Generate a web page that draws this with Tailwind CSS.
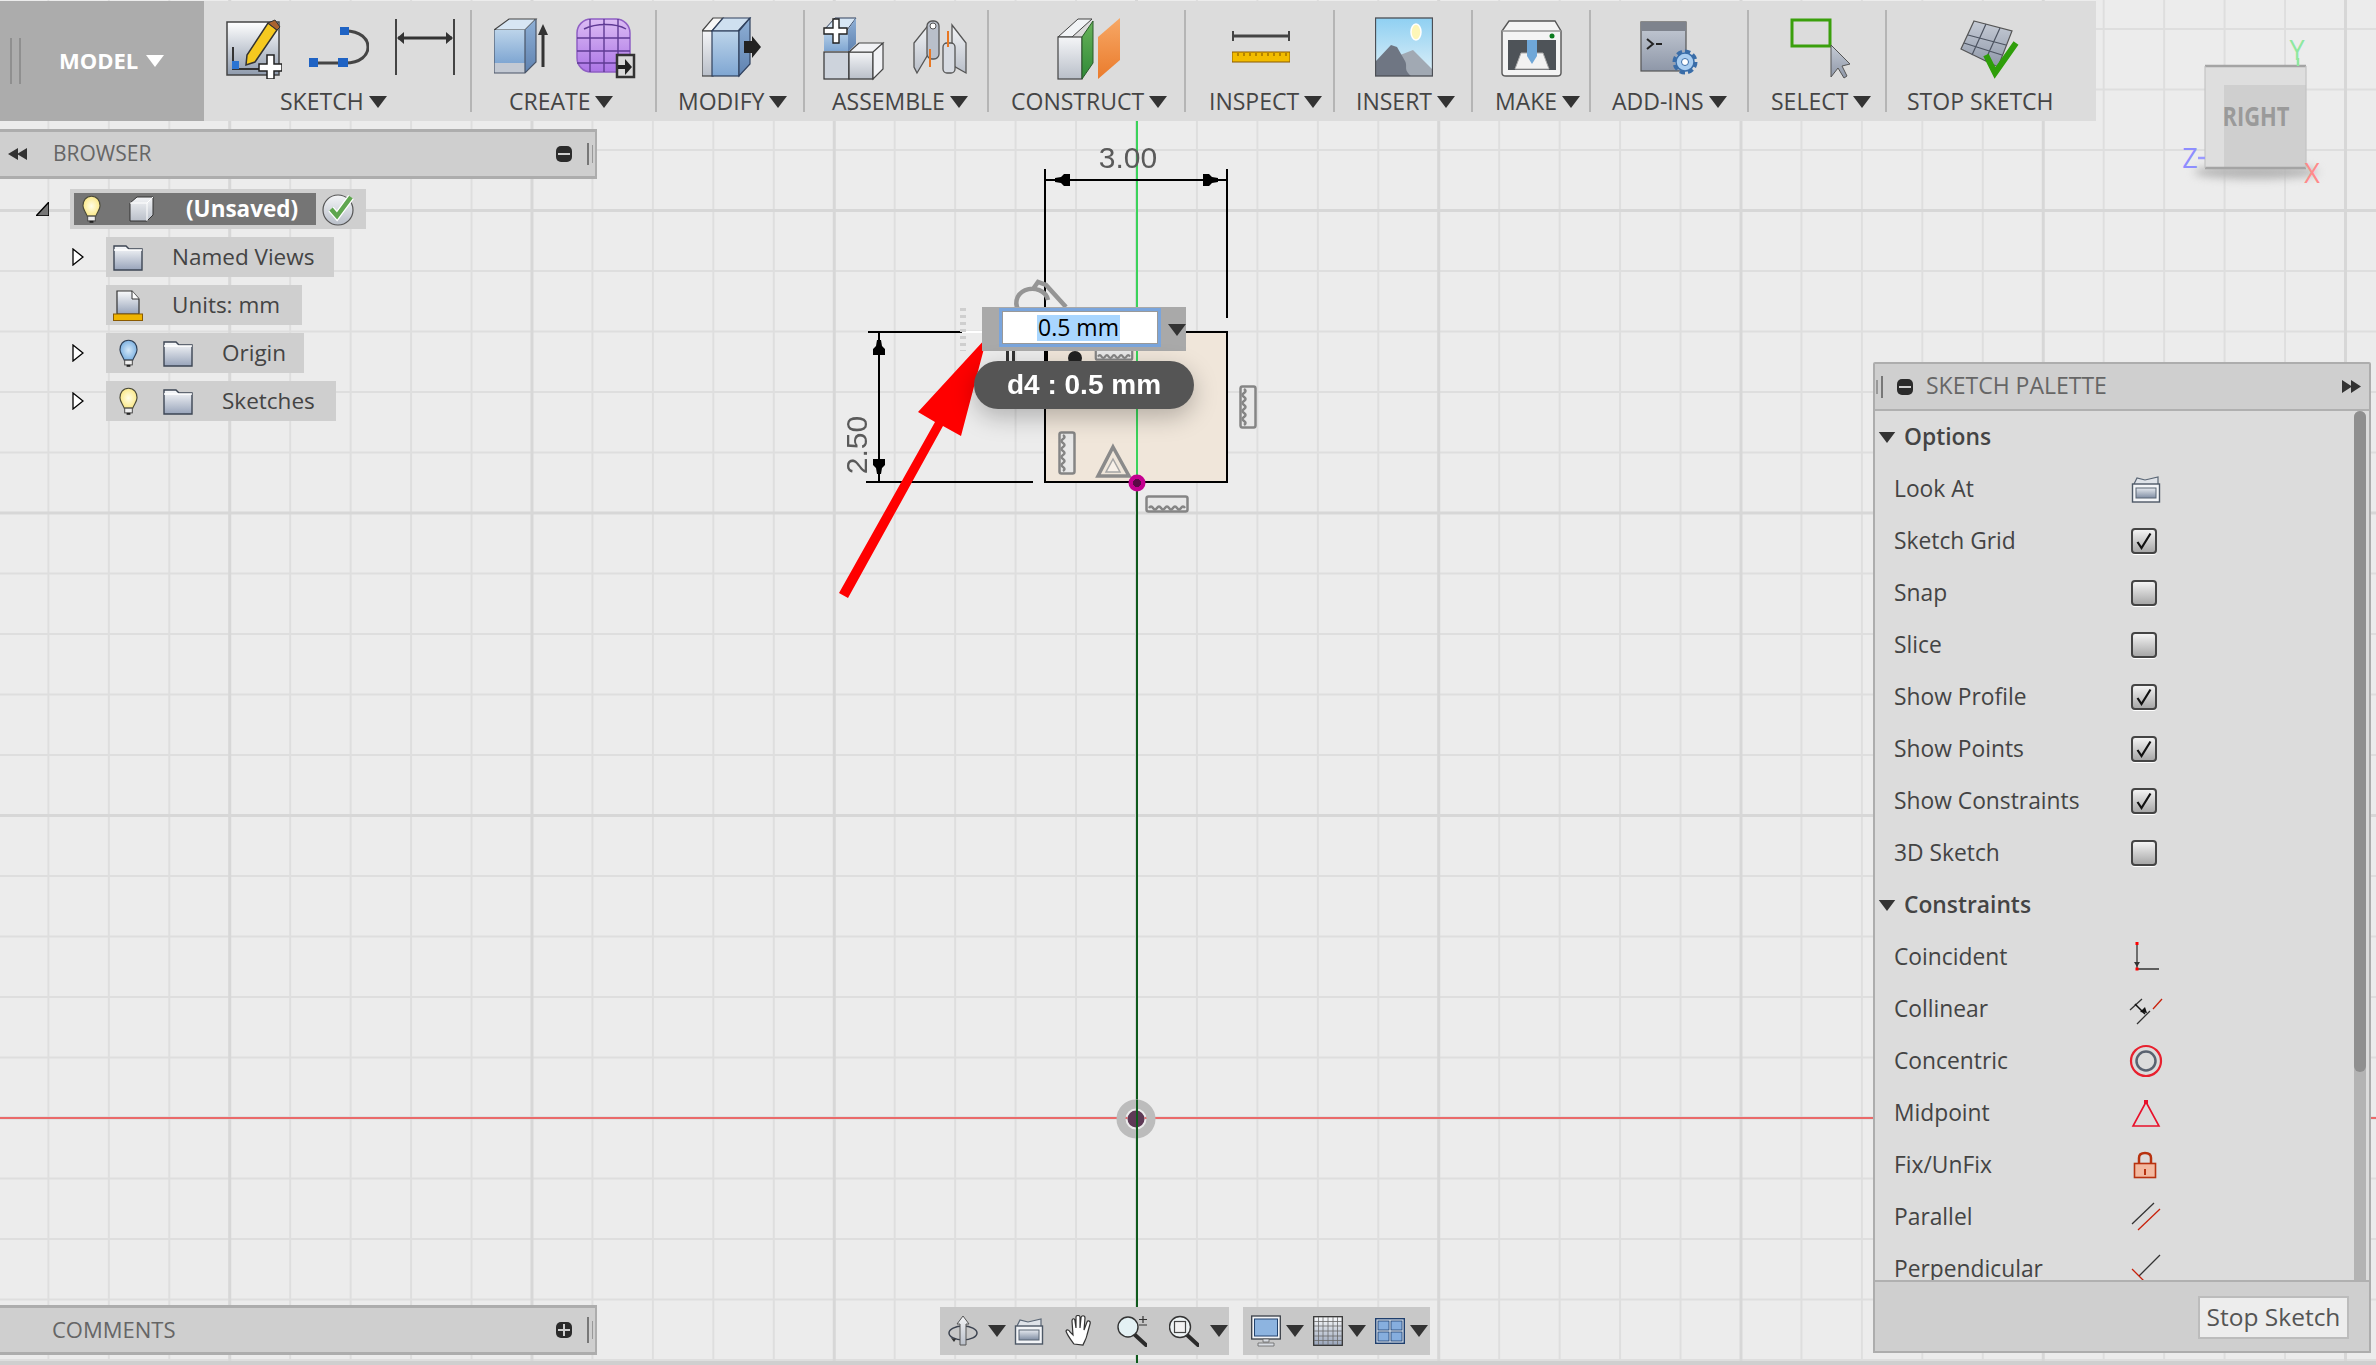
<!DOCTYPE html>
<html>
<head>
<meta charset="utf-8">
<script src="https://cdn.jsdelivr.net/npm/@tailwindcss/browser@4"></script>
</head>
<body class="m-0">
<svg class="absolute w-0 h-0" aria-hidden="true">
  <defs>
    <linearGradient id="gPaper" x1="0" y1="0" x2="0" y2="1"><stop offset="0" stop-color="#ffffff"/><stop offset="1" stop-color="#8f9bad"/></linearGradient>
    <linearGradient id="gBlue" x1="0" y1="0" x2="0" y2="1"><stop offset="0" stop-color="#bcd4ea"/><stop offset="1" stop-color="#7fa6d2"/></linearGradient>
    <linearGradient id="gBlueSide" x1="0" y1="0" x2="0" y2="1"><stop offset="0" stop-color="#8fb0d6"/><stop offset="1" stop-color="#5f82b0"/></linearGradient>
    <linearGradient id="gPurple" x1="0" y1="0" x2="0" y2="1"><stop offset="0" stop-color="#dcbcf4"/><stop offset="1" stop-color="#ab74e6"/></linearGradient>
    <linearGradient id="gGray" x1="0" y1="0" x2="0" y2="1"><stop offset="0" stop-color="#f4f5f7"/><stop offset="1" stop-color="#b9bfc9"/></linearGradient>
    <linearGradient id="gSteel" x1="0" y1="0" x2="0" y2="1"><stop offset="0" stop-color="#c6ccd6"/><stop offset="1" stop-color="#8e97a8"/></linearGradient>
    <linearGradient id="gGreen" x1="0" y1="0" x2="0" y2="1"><stop offset="0" stop-color="#69b35a"/><stop offset="1" stop-color="#2f8a38"/></linearGradient>
    <linearGradient id="gOrange" x1="0" y1="0" x2="0" y2="1"><stop offset="0" stop-color="#f7a866"/><stop offset="1" stop-color="#ea7b2c"/></linearGradient>
    <linearGradient id="gSky" x1="0" y1="0" x2="0" y2="1"><stop offset="0" stop-color="#8fd0f2"/><stop offset="1" stop-color="#dff0f8"/></linearGradient>
    <linearGradient id="gFolder" x1="0" y1="0" x2="0" y2="1"><stop offset="0" stop-color="#fafbfc"/><stop offset="1" stop-color="#98a4ba"/></linearGradient>
    <linearGradient id="gLook" x1="0" y1="0" x2="0" y2="1"><stop offset="0" stop-color="#e5e9ef"/><stop offset="1" stop-color="#7f8da3"/></linearGradient>
    <radialGradient id="gBulbY"><stop offset="0" stop-color="#fffde6"/><stop offset="1" stop-color="#fbe98a"/></radialGradient>
    <radialGradient id="gBulbB"><stop offset="0" stop-color="#d5e8f8"/><stop offset="1" stop-color="#7fb3e2"/></radialGradient>
    <radialGradient id="gPink"><stop offset="0" stop-color="#5a0a46"/><stop offset="0.45" stop-color="#5a0a46"/><stop offset="0.5" stop-color="#c4008f"/><stop offset="1" stop-color="#c4008f"/></radialGradient>
    <symbol id="tri" viewBox="0 0 18 12"><polygon points="0,0 18,0 9,12" fill="#333"/></symbol>
    <symbol id="folder" viewBox="0 0 30 27">
      <path d="M1 26V2h12l3 3h13v21z" fill="url(#gFolder)" stroke="#3d4654" stroke-width="1.4"/>
      <path d="M1 6h28" stroke="#ffffff" stroke-width="1.5"/>
    </symbol>
    <symbol id="bulbY" viewBox="0 0 20 30">
      <path d="M10 1C4 1 1 6 1 11c0 4 3 7 4.500 11h9C16 18 19 15 19 11c0-5-3-10-9-10z" fill="url(#gBulbY)" stroke="#4a4a3a" stroke-width="1.200"/>
      <rect x="6" y="22" width="8" height="5" fill="#eeeeee" stroke="#444" stroke-width="1"/>
      <rect x="8" y="27" width="4" height="2" fill="#222"/>
    </symbol>
    <symbol id="bulbB" viewBox="0 0 20 30">
      <path d="M10 1C4 1 1 6 1 11c0 4 3 7 4.500 11h9C16 18 19 15 19 11c0-5-3-10-9-10z" fill="url(#gBulbB)" stroke="#2f3f55" stroke-width="1.200"/>
      <rect x="6" y="22" width="8" height="5" fill="#eeeeee" stroke="#444" stroke-width="1"/>
      <rect x="8" y="27" width="4" height="2" fill="#222"/>
    </symbol>
    <symbol id="look" viewBox="0 0 30 28">
      <path d="M3 9L6 3l8 2 13-3v7" fill="#dfe3e9" stroke="#5a6675" stroke-width="1.200"/>
      <rect x="1.500" y="9" width="27" height="18" fill="#f3f5f8" stroke="#4d5866" stroke-width="1.400"/>
      <rect x="5" y="13" width="20" height="10" fill="url(#gLook)" stroke="#5a6675" stroke-width="1"/>
    </symbol>
    <symbol id="chk" viewBox="0 0 20 20"><path d="M3.500 11l4 6L16.500 2.500" fill="none" stroke="#111" stroke-width="2.200"/></symbol>
    <symbol id="gruler" viewBox="0 0 44 18">
      <rect x="1.500" y="1.500" width="41" height="15" rx="2" fill="#e8e8e8" stroke="#858585" stroke-width="2.500"/>
      <path d="M4 13q2-3 4 0t4 0 4 0 4 0 4 0 4 0 4 0 4 0 4 0" fill="none" stroke="#858585" stroke-width="2.500"/>
    </symbol>
  </defs>
</svg>

<div class="relative w-[2376px] h-[1365px] overflow-hidden bg-[#ececec] font-['Open_Sans',sans-serif]">

  <!-- canvas -->
  <svg class="absolute left-0 top-0 w-[2376px] h-[1365px]" viewBox="0 0 2376 1365">
    <defs>
      <pattern id="minor" patternUnits="userSpaceOnUse" x="1135.500" y="1117" width="60.450" height="60.500">
        <path d="M1 0V60.500M0 1H60.450" stroke="#dedede" stroke-width="2" fill="none"/>
      </pattern>
      <pattern id="major" patternUnits="userSpaceOnUse" x="1135" y="1116.500" width="302.250" height="302.500">
        <path d="M1.500 0V302.500M0 1.500H302.250" stroke="#d7d7d7" stroke-width="3" fill="none"/>
      </pattern>
    </defs>
    <rect width="2376" height="1365" fill="url(#minor)"/>
    <rect width="2376" height="1365" fill="url(#major)"/>
    <rect y="1361" width="2376" height="4" fill="#cfcfcf"/>

    <!-- axes -->
    <path d="M0 1118H2376" stroke="#ea6a6a" stroke-width="1.800"/>
    <path d="M1137 121V482" stroke="#3ad35a" stroke-width="2"/>
    <path d="M1137 482V1363" stroke="#0f5a1c" stroke-width="2"/>

    <!-- origin -->
    <circle cx="1136" cy="1119" r="15" fill="none" stroke="#bcbcbc" stroke-width="9"/>
    <circle cx="1136" cy="1119" r="9" fill="#ffffff" fill-opacity="0.500"/>
    <circle cx="1136" cy="1119" r="8.500" fill="#5e3a56"/>
    <path d="M1137 1100V1140" stroke="#0f5a1c" stroke-width="2"/>

    <!-- profile -->
    <rect x="1045" y="332" width="182" height="150" fill="#f0e6da"/>
    <path d="M1137 332V482" stroke="#3ad35a" stroke-width="2"/>
    <path d="M1228 332H1045V482H1227V332" fill="none" stroke="#000" stroke-width="2"/>

    <!-- dimension 3.00 -->
    <path d="M1045 169V332M1227 169V318" stroke="#000" stroke-width="2"/>
    <path d="M1046 180H1226" stroke="#000" stroke-width="2"/>
    <path d="M1055 178l6-1 3-3h6v12h-6l-3-3-6-1zM1218 178l-6-1-3-3h-6v12h6l3-3 6-1z" fill="#000"/>
    <text class="blur-[0.5px]" x="1128" y="168" text-anchor="middle" font-family="Liberation Sans" font-size="30" fill="#5a5a5a">3.00</text>

    <!-- dimension 2.50 -->
    <path d="M868 332H962M866 482H1033" stroke="#000" stroke-width="2"/>
    <path d="M962 332H982" stroke="#fff" stroke-width="2"/>
    <path d="M879 333V481" stroke="#000" stroke-width="2"/>
    <path d="M877 340h4l1 6 3 3v6h-12v-6l3-3zM873 459h12v6l-3 3-1 6h-4l-1-6-3-3z" fill="#000"/>
    <text class="blur-[0.5px]" transform="translate(867 445) rotate(-90)" text-anchor="middle" font-family="Liberation Sans" font-size="30" fill="#5a5a5a">2.50</text>

    <!-- constraint glyphs -->
    <g class="blur-[0.5px]">
      <use href="#gruler" x="1145" y="495" width="44" height="18"/>
      <use href="#gruler" transform="translate(1257 385) rotate(90)" width="44" height="18"/>
      <use href="#gruler" transform="translate(1077 431) rotate(90)" width="44" height="20"/>
      <use href="#gruler" x="1092" y="345" width="44" height="16"/>
      <path d="M1113 447L1129 476H1098z" fill="#efe6da" stroke="#8a8a8a" stroke-width="3.500"/>
      <path d="M1113 459L1120 472H1106z" fill="#f7f0e8" stroke="#a5a5a5" stroke-width="1.500"/>
      <path d="M1033 289l5-7 8 3 20 22M1048 300a16 14 0 1 0-2 10" fill="none" stroke="#959595" stroke-width="4.500"/>
    </g>
    <rect x="1006" y="350" width="3" height="12" fill="#333"/><rect x="1012" y="350" width="3" height="12" fill="#333"/>
    <circle cx="1075" cy="358" r="7" fill="#222"/>
    <path d="M1047 350v12" stroke="#000" stroke-width="2"/>
    <path d="M963 308V351" stroke="#cfcfcf" stroke-width="6" stroke-dasharray="3 4"/>

    <!-- sketch point -->
    <circle cx="1137" cy="483" r="8.500" fill="url(#gPink)"/>

    <!-- viewcube -->
    <ellipse class="blur-[4px]" cx="2256" cy="172" rx="62" ry="7" fill="#b5b5b5"/>
    <rect x="2205" y="66" width="101" height="102" fill="#dedede"/>
    <rect x="2224" y="85" width="82" height="83" fill="#cfcfcf"/>
    <path d="M2205 66H2306M2205 168H2306" stroke="#a4a4a4" stroke-width="2.500"/>
    <path d="M2205 66V168M2306 66V168" stroke="#c4c4c4" stroke-width="1.200"/>
    <path d="M2298 58V66" stroke="#8fe89f" stroke-width="2.500"/>
    <path d="M2198 158H2205" stroke="#9a9aff" stroke-width="2.500"/>
    <text x="2256" y="126" text-anchor="middle" font-family="Open Sans" font-weight="700" font-size="27" textLength="67" lengthAdjust="spacingAndGlyphs" fill="#9a9a9a">RIGHT</text>
    <text x="2297" y="60" text-anchor="middle" font-family="Open Sans" font-size="27" fill="#8fe89f">Y</text>
    <text x="2190" y="168" text-anchor="middle" font-family="Open Sans" font-size="27" fill="#8e8eff">Z</text>
    <text x="2312" y="183" text-anchor="middle" font-family="Open Sans" font-size="27" fill="#ff8a8a">X</text>
  </svg>

  <!-- ribbon toolbar -->
  <div class="absolute left-0 top-[1px] flex h-[120px] w-[2096px] bg-[#dcdcdc] text-[#454545] [&_span]:pb-[1px]">
    <div class="flex w-[204px] shrink-0 items-center bg-[#acacac] pl-[10px]">
      <div class="h-[46px] w-[2px] bg-[#8f8f8f]"></div>
      <div class="ml-[7px] h-[46px] w-[2px] bg-[#8f8f8f]"></div>
      <span class="ml-[38px] text-[22px] font-bold text-white">MODEL</span>
      <svg class="ml-[8px] h-[12px] w-[18px]" viewBox="0 0 18 12"><polygon points="0,0 18,0 9,12" fill="#fff"/></svg>
    </div>

    <!-- SKETCH -->
    <div class="flex w-[266px] shrink-0 flex-col">
      <div class="flex h-[87px] items-start pt-[16px]">
        <svg class="ml-[22px] h-[62px] w-[56px] shrink-0" viewBox="0 0 56 62">
          <rect x="1" y="5" width="52" height="53" fill="url(#gPaper)" stroke="#444" stroke-width="1.500"/>
          <path d="M42 6l9 7-22 32-9 3 1-10z" fill="#f6c91f" stroke="#333" stroke-width="1.500"/>
          <path d="M42 6l7-3 5 7-3 3z" fill="#a9622f" stroke="#333" stroke-width="1"/>
          <path d="M7 30V52H36" fill="none" stroke="#333" stroke-width="2"/>
          <rect x="6" y="44" width="7" height="8" fill="#2b74d2"/>
          <path d="M41 38h7v9h8v7h-8v8h-7v-8h-8v-7h8z" fill="#fff" stroke="#222" stroke-width="1.500"/>
        </svg>
        <svg class="ml-[27px] h-[62px] w-[60px] shrink-0" viewBox="0 0 60 62">
          <path d="M36 14C52 14 59 22 59 30S52 46 36 46H4" fill="none" stroke="#454545" stroke-width="3"/>
          <rect x="31" y="10" width="9" height="8" fill="#1f63c4"/>
          <rect x="0" y="41" width="9" height="9" fill="#1f63c4"/>
          <rect x="29" y="41" width="10" height="9" fill="#1f63c4"/>
        </svg>
        <svg class="ml-[26px] h-[62px] w-[60px] shrink-0" viewBox="0 0 60 62">
          <path d="M1 2V58M59 2V58" stroke="#444" stroke-width="2"/>
          <path d="M3 21H57" stroke="#333" stroke-width="3"/>
          <path d="M2 21l7-6v12zM58 21l-7-6v12z" fill="#333"/>
        </svg>
      </div>
      <div class="ml-[76px] flex h-[28px] items-center gap-[5px] text-[23px]"><span>SKETCH</span><svg class="h-[12px] w-[18px]"><use href="#tri"/></svg></div>
    </div>
    <div class="my-[9px] h-[102px] w-[2px] shrink-0 bg-[#b5b5b5]"></div>

    <!-- CREATE -->
    <div class="flex w-[183px] shrink-0 flex-col">
      <div class="flex h-[87px] items-start pt-[16px]">
        <svg class="ml-[22px] h-[62px] w-[56px] shrink-0" viewBox="0 0 56 62">
          <path d="M0 13L15 2h27L31 13z" fill="#d7e6f4" stroke="#444" stroke-width="1.200"/>
          <rect x="0" y="13" width="31" height="33" fill="url(#gBlue)"/>
          <rect x="0" y="46" width="31" height="10" fill="#c3c9d3"/>
          <path d="M31 13l11-11v43L31 56z" fill="url(#gBlueSide)"/>
          <path d="M0 13V56H31L42 45V2M31 13V56" fill="none" stroke="#4a5568" stroke-width="1.200"/>
          <path d="M49 50V14" stroke="#333" stroke-width="3"/><path d="M49 7l5 11H44z" fill="#333"/>
        </svg>
        <svg class="ml-[26px] h-[62px] w-[60px] shrink-0" viewBox="0 0 60 62">
          <rect x="1" y="2" width="53" height="53" rx="14" fill="url(#gPurple)" stroke="#8f5fc4" stroke-width="1.500"/>
          <path d="M1 21H54M1 34H54M1 46H54M14 2V55M28 2V55M42 2V55M8 12C20 6 40 6 50 12" fill="none" stroke="#5f3a94" stroke-width="1.400"/>
          <rect x="41" y="38" width="17" height="22" fill="#d9d9d9" stroke="#333" stroke-width="2.500"/>
          <path d="M42 48h7v-6l7 8-7 8v-6h-7z" fill="#222"/>
        </svg>
      </div>
      <div class="ml-[37px] flex h-[28px] items-center gap-[5px] text-[23px]"><span>CREATE</span><svg class="h-[12px] w-[18px]"><use href="#tri"/></svg></div>
    </div>
    <div class="my-[9px] h-[102px] w-[2px] shrink-0 bg-[#b5b5b5]"></div>

    <!-- MODIFY -->
    <div class="flex w-[146px] shrink-0 flex-col">
      <div class="flex h-[87px] items-start pt-[16px]">
        <svg class="ml-[45px] h-[62px] w-[60px] shrink-0" viewBox="0 0 60 62">
          <path d="M0 14L11 1h10L10 14z" fill="#f7f7f7" stroke="#444" stroke-width="1.200"/>
          <rect x="0" y="14" width="11" height="45" fill="url(#gGray)" stroke="#444" stroke-width="1.200"/>
          <path d="M10 14L21 1h27L36 14z" fill="#cfe0f0" stroke="#30415e" stroke-width="1.200"/>
          <rect x="10" y="14" width="27" height="45" fill="url(#gBlue)" stroke="#30415e" stroke-width="1.200"/>
          <path d="M37 14L48 1v46L37 59z" fill="url(#gBlueSide)" stroke="#30415e" stroke-width="1.200"/>
          <path d="M42 24h8v-5l9 11-9 11v-5h-8z" fill="#222"/>
        </svg>
      </div>
      <div class="ml-[21px] flex h-[28px] items-center gap-[5px] text-[23px]"><span>MODIFY</span><svg class="h-[12px] w-[18px]"><use href="#tri"/></svg></div>
    </div>
    <div class="my-[9px] h-[102px] w-[2px] shrink-0 bg-[#b5b5b5]"></div>

    <!-- ASSEMBLE -->
    <div class="flex w-[182px] shrink-0 flex-col">
      <div class="flex h-[87px] items-start pt-[16px]">
        <svg class="ml-[18px] h-[64px] w-[62px] shrink-0" viewBox="0 0 62 64">
          <path d="M1 13L12 1h21L24 13z" fill="#d7e6f4" stroke="#30415e" stroke-width="1"/>
          <rect x="1" y="13" width="24" height="21" fill="url(#gBlue)"/>
          <path d="M25 13L33 1v26l-8 8z" fill="url(#gBlueSide)"/>
          <rect x="1" y="35" width="25" height="27" fill="#cdd3dc" stroke="#333" stroke-width="1.200"/>
          <rect x="26" y="35" width="24" height="27" fill="url(#gGray)" stroke="#333" stroke-width="1.200"/>
          <path d="M26 35L36 26h24L50 35zM50 35l10-9v26l-10 10z" fill="#f1f2f5" stroke="#444" stroke-width="1.200"/>
          <path d="M10 2h6v9h8v6h-8v9h-6v-9H1v-6h9z" fill="#fff" stroke="#222" stroke-width="1.400"/>
        </svg>
        <svg class="ml-[27px] h-[62px] w-[58px] shrink-0" viewBox="0 0 58 62">
          <path d="M2 50V26L18 6v28L5 56z" fill="url(#gGray)" stroke="#555" stroke-width="1.300"/>
          <rect x="15" y="4" width="12" height="38" rx="5" fill="#b9bfca" stroke="#555" stroke-width="1.300"/>
          <circle cx="21" cy="9" r="3" fill="#fff" stroke="#555"/>
          <path d="M54 56V26L40 8v40z" fill="url(#gGray)" stroke="#555" stroke-width="1.300"/>
          <rect x="31" y="26" width="12" height="30" rx="4" fill="#d7dbe2" stroke="#555" stroke-width="1.300"/>
          <path d="M36 14V30M18 32V50" stroke="#e87722" stroke-width="2"/>
        </svg>
      </div>
      <div class="ml-[27px] flex h-[28px] items-center gap-[5px] text-[23px]"><span>ASSEMBLE</span><svg class="h-[12px] w-[18px]"><use href="#tri"/></svg></div>
    </div>
    <div class="my-[9px] h-[102px] w-[2px] shrink-0 bg-[#b5b5b5]"></div>

    <!-- CONSTRUCT -->
    <div class="flex w-[195px] shrink-0 flex-col">
      <div class="flex h-[87px] items-start pt-[16px]">
        <svg class="ml-[67px] h-[64px] w-[66px] shrink-0" viewBox="0 0 66 64">
          <path d="M2 20L22 2h14L16 20z" fill="#f2f4f6" stroke="#444" stroke-width="1"/>
          <rect x="2" y="20" width="24" height="42" fill="url(#gGray)" stroke="#444" stroke-width="1.200"/>
          <path d="M26 20L37 4v42L26 62z" fill="url(#gGreen)" stroke="#2b5a2b" stroke-width="1"/>
          <path d="M42 20L64 1v42L42 62z" fill="url(#gOrange)"/>
        </svg>
      </div>
      <div class="ml-[22px] flex h-[28px] items-center gap-[5px] text-[23px]"><span>CONSTRUCT</span><svg class="h-[12px] w-[18px]"><use href="#tri"/></svg></div>
    </div>
    <div class="my-[9px] h-[102px] w-[2px] shrink-0 bg-[#b5b5b5]"></div>

    <!-- INSPECT -->
    <div class="flex w-[147px] shrink-0 flex-col">
      <div class="flex h-[87px] items-start pt-[16px]">
        <svg class="ml-[46px] h-[62px] w-[58px] shrink-0" viewBox="0 0 58 62">
          <path d="M1 14V24M57 14V24" stroke="#444" stroke-width="2"/>
          <path d="M1 19H57" stroke="#444" stroke-width="3"/>
          <rect x="0" y="35" width="58" height="10" fill="#f2bc00" stroke="#8a5a00" stroke-width="1"/>
          <path d="M6 36v3M12 36v3M18 36v3M24 36v3M30 36v3M36 36v3M42 36v3M48 36v3M54 36v3" stroke="#7a4d00" stroke-width="1"/>
        </svg>
      </div>
      <div class="ml-[23px] flex h-[28px] items-center gap-[5px] text-[23px]"><span>INSPECT</span><svg class="h-[12px] w-[18px]"><use href="#tri"/></svg></div>
    </div>
    <div class="my-[9px] h-[102px] w-[2px] shrink-0 bg-[#b5b5b5]"></div>

    <!-- INSERT -->
    <div class="flex w-[136px] shrink-0 flex-col">
      <div class="flex h-[87px] items-start pt-[16px]">
        <svg class="ml-[40px] h-[62px] w-[58px] shrink-0" viewBox="0 0 58 62">
          <rect x="0.500" y="1" width="57" height="58" fill="url(#gSky)"/>
          <ellipse cx="41" cy="15" rx="5" ry="8" fill="#fdf6b8" stroke="#fff" stroke-width="1.500"/>
          <path d="M20 40L38 33 57 52V59H20z" fill="#a1a9b3"/>
          <path d="M1 59V44L16 28 22 30 30 44C33 50 28 52 36 59z" fill="#6f7683"/>
          <rect x="0.500" y="1" width="57" height="58" fill="none" stroke="#4c4f55" stroke-width="1.300"/>
        </svg>
      </div>
      <div class="ml-[21px] flex h-[28px] items-center gap-[5px] text-[23px]"><span>INSERT</span><svg class="h-[12px] w-[18px]"><use href="#tri"/></svg></div>
    </div>
    <div class="my-[9px] h-[102px] w-[2px] shrink-0 bg-[#b5b5b5]"></div>

    <!-- MAKE -->
    <div class="flex w-[116px] shrink-0 flex-col">
      <div class="flex h-[87px] items-start pt-[16px]">
        <svg class="ml-[28px] h-[62px] w-[62px] shrink-0" viewBox="0 0 62 62">
          <path d="M8 4H54L60 14V56Q60 59 56 59H5Q1 59 1 56V14z" fill="#f4f4f4" stroke="#555" stroke-width="1.400"/>
          <path d="M1 14H60" stroke="#999" stroke-width="1.500"/>
          <circle cx="51" cy="19" r="2.500" fill="#0b7a1e"/>
          <rect x="7" y="23" width="48" height="30" fill="#4e5358"/>
          <path d="M14 52l6-16h22l6 16z" fill="#f2f2f2" stroke="#aaa"/>
          <path d="M26 23h10v16l-5 8-5-8z" fill="#6fa7d8"/>
        </svg>
      </div>
      <div class="ml-[22px] flex h-[28px] items-center gap-[5px] text-[23px]"><span>MAKE</span><svg class="h-[12px] w-[18px]"><use href="#tri"/></svg></div>
    </div>
    <div class="my-[9px] h-[102px] w-[2px] shrink-0 bg-[#b5b5b5]"></div>

    <!-- ADD-INS -->
    <div class="flex w-[156px] shrink-0 flex-col">
      <div class="flex h-[87px] items-start pt-[16px]">
        <svg class="ml-[49px] h-[62px] w-[60px] shrink-0" viewBox="0 0 60 62">
          <rect x="1" y="5" width="45" height="49" fill="url(#gSteel)" stroke="#555" stroke-width="1.200"/>
          <rect x="1" y="5" width="45" height="9" fill="#7e838d"/>
          <path d="M7 22l6 5-6 5M16 27h6" fill="none" stroke="#222" stroke-width="2"/>
          <circle cx="45" cy="45" r="10" fill="#a9cdf0" stroke="#3a6da8" stroke-width="5" stroke-dasharray="5 2.800"/>
          <circle cx="45" cy="45" r="9" fill="#a9cdf0" stroke="#3a6da8" stroke-width="1.500"/>
          <circle cx="45" cy="45" r="3.500" fill="#fff" stroke="#3a6da8"/>
        </svg>
      </div>
      <div class="ml-[21px] flex h-[28px] items-center gap-[5px] text-[23px]"><span>ADD-INS</span><svg class="h-[12px] w-[18px]"><use href="#tri"/></svg></div>
    </div>
    <div class="my-[9px] h-[102px] w-[2px] shrink-0 bg-[#b5b5b5]"></div>

    <!-- SELECT -->
    <div class="flex w-[136px] shrink-0 flex-col">
      <div class="flex h-[87px] items-start pt-[16px]">
        <svg class="ml-[41px] h-[62px] w-[60px] shrink-0" viewBox="0 0 60 62">
          <rect x="2" y="3" width="38" height="26" fill="none" stroke="#3a9f0c" stroke-width="3"/>
          <path d="M41 28V60l7-9 6 10 3-2-5-10 8-2z" fill="url(#gSteel)" stroke="#555" stroke-width="1"/>
        </svg>
      </div>
      <div class="ml-[22px] flex h-[28px] items-center gap-[5px] text-[23px]"><span>SELECT</span><svg class="h-[12px] w-[18px]"><use href="#tri"/></svg></div>
    </div>
    <div class="my-[9px] h-[102px] w-[2px] shrink-0 bg-[#b5b5b5]"></div>

    <!-- STOP SKETCH -->
    <div class="flex flex-1 flex-col">
      <div class="flex h-[87px] items-start pt-[16px]">
        <svg class="ml-[73px] h-[62px] w-[60px] shrink-0" viewBox="0 0 60 62">
          <path d="M14 4L52 14 38 50 1 32z" fill="url(#gSteel)" stroke="#555" stroke-width="1.200"/>
          <path d="M26 7L12 38M40 11L25 44M8 18L46 28M4 26L42 38" stroke="#4c5360" stroke-width="1.200"/>
          <path d="M26 38l9 18 21-30" fill="none" stroke="#2f9e0a" stroke-width="6"/>
        </svg>
      </div>
      <div class="ml-[20px] flex h-[28px] items-center text-[23px]"><span>STOP SKETCH</span></div>
    </div>
  </div>

  <!-- browser panel -->
  <div class="absolute left-0 top-[129px] flex h-[50px] w-[597px] items-center border-y-[3px] border-r-[2px] border-[#adadad] bg-[#cfcfcf] text-[#666]">
    <svg class="ml-[8px] h-[12px] w-[19px]" viewBox="0 0 19 12"><path d="M10 0v12L0 6zM19 0v12L9 6z" fill="#333"/></svg>
    <span class="ml-[26px] pb-[1px] text-[21px]">BROWSER</span>
    <div class="ml-auto flex h-[16px] w-[16px] items-center justify-center rounded-[5px] bg-[#2b2b2b]"><div class="h-[2px] w-[12px] bg-[#cfcfcf]"></div></div>
    <div class="ml-[15px] h-[22px] w-[2px] bg-[#777]"></div>
    <div class="ml-[3px] mr-[2px] h-[18px] w-[1.500px] bg-[#999]"></div>
  </div>

  <!-- tree -->
  <div class="absolute left-0 top-[189px] flex flex-col gap-[8px] text-[22.500px] text-[#444] [&_span]:pb-[1px]">
    <div class="flex h-[40px] items-center pl-[36px]">
      <svg class="h-[14px] w-[13px]" viewBox="0 0 13 14"><path d="M13 0V14H0z" fill="#777" stroke="#000" stroke-width="1.500"/></svg>
      <div class="ml-[21px] flex h-[40px] w-[296px] items-center bg-[#cfcfcf] pl-[4px]">
        <div class="flex h-[32px] w-[242px] items-center bg-[#757575]">
          <svg class="ml-[8px] h-[29px] w-[19px] shrink-0"><use href="#bulbY"/></svg>
          <svg class="ml-[28px] h-[26px] w-[25px] shrink-0" viewBox="0 0 25 26"><path d="M1 7L8 1h16v18l-6 6H1z" fill="url(#gGray)" stroke="#333" stroke-width="1"/><path d="M1 7h17v18M18 7l6-6" fill="none" stroke="#fff" stroke-width="1"/></svg>
          <span class="ml-[32px] font-bold text-white">(Unsaved)</span>
        </div>
        <svg class="ml-[6px] h-[34px] w-[34px] shrink-0" viewBox="0 0 34 34">
          <circle cx="16" cy="18" r="15" fill="url(#gGray)" stroke="#555" stroke-width="1.200"/>
          <path d="M9 17l6 7L29 5" fill="none" stroke="#fff" stroke-width="7"/>
          <path d="M9 17l6 7L29 5" fill="none" stroke="#5fa64f" stroke-width="4.500"/>
        </svg>
      </div>
    </div>
    <div class="flex h-[40px] items-center pl-[72px]">
      <svg class="h-[18px] w-[12px]" viewBox="0 0 12 18"><path d="M1 1L11 9 1 17z" fill="#fff" stroke="#000" stroke-width="1.300"/></svg>
      <div class="ml-[22px] flex h-[40px] w-[228px] items-center bg-[#cfcfcf] pl-[7px]">
        <svg class="h-[27px] w-[30px] shrink-0"><use href="#folder"/></svg>
        <span class="ml-[29px]">Named Views</span>
      </div>
    </div>
    <div class="flex h-[40px] items-center pl-[106px]">
      <div class="flex h-[40px] w-[196px] items-center bg-[#cfcfcf] pl-[7px]">
        <svg class="h-[31px] w-[30px] shrink-0" viewBox="0 0 30 31">
          <path d="M4 1H19L26 9V24H4z" fill="url(#gFolder)" stroke="#333" stroke-width="1.200"/>
          <path d="M19 1V9H26" fill="#fff" stroke="#333" stroke-width="1"/>
          <rect x="0.500" y="24" width="29" height="6.500" fill="#efb400" stroke="#8a5a00" stroke-width="1"/>
        </svg>
        <span class="ml-[29px]">Units: mm</span>
      </div>
    </div>
    <div class="flex h-[40px] items-center pl-[72px]">
      <svg class="h-[18px] w-[12px]" viewBox="0 0 12 18"><path d="M1 1L11 9 1 17z" fill="#fff" stroke="#000" stroke-width="1.300"/></svg>
      <div class="ml-[22px] flex h-[40px] w-[198px] items-center bg-[#cfcfcf] pl-[13px]">
        <svg class="h-[29px] w-[19px] shrink-0"><use href="#bulbB"/></svg>
        <svg class="ml-[25px] h-[27px] w-[30px] shrink-0"><use href="#folder"/></svg>
        <span class="ml-[29px]">Origin</span>
      </div>
    </div>
    <div class="flex h-[40px] items-center pl-[72px]">
      <svg class="h-[18px] w-[12px]" viewBox="0 0 12 18"><path d="M1 1L11 9 1 17z" fill="#fff" stroke="#000" stroke-width="1.300"/></svg>
      <div class="ml-[22px] flex h-[40px] w-[230px] items-center bg-[#cfcfcf] pl-[13px]">
        <svg class="h-[29px] w-[19px] shrink-0"><use href="#bulbY"/></svg>
        <svg class="ml-[25px] h-[27px] w-[30px] shrink-0"><use href="#folder"/></svg>
        <span class="ml-[29px]">Sketches</span>
      </div>
    </div>
  </div>

  <!-- comments panel -->
  <div class="absolute left-0 top-[1305px] flex h-[50px] w-[597px] items-center border-y-[3px] border-r-[2px] border-[#adadad] bg-[#cfcfcf] text-[#666]">
    <span class="ml-[52px] pb-[2px] text-[22px]">COMMENTS</span>
    <div class="ml-auto flex h-[16px] w-[16px] items-center justify-center rounded-[5px] bg-[#2b2b2b]">
      <svg class="h-[12px] w-[12px]" viewBox="0 0 12 12"><path d="M6 0V12M0 6H12" stroke="#cfcfcf" stroke-width="2"/></svg>
    </div>
    <div class="ml-[15px] h-[26px] w-[2px] bg-[#777]"></div>
    <div class="ml-[3px] mr-[2px] h-[18px] w-[1.500px] bg-[#999]"></div>
  </div>

  <!-- red annotation arrow -->
  <svg class="absolute left-[820px] top-[320px] h-[290px] w-[180px]" viewBox="820 320 180 290">
    <polygon points="987,337 961,436 943,426 848,598 839,593 935,422 918,412" fill="#ff0000"/>
  </svg>

  <!-- dimension input -->
  <div class="absolute left-[982px] top-[307px] flex h-[44px] w-[204px] items-start bg-[#a9a9a9] pl-[17px] pt-[1px] text-[23px] text-black">
    <div class="flex h-[39px] w-[162px] items-center justify-center border-[3px] border-[#7aa5dc] bg-white pr-[3px] outline-1 outline-offset-[-4px] outline-[#999]">
      <span class="flex h-[26px] items-center bg-[#a9d6ff] px-[1px]">0.5 mm</span>
    </div>
    <svg class="ml-[7px] mt-[16px] h-[12px] w-[18px] shrink-0"><use href="#tri"/></svg>
  </div>

  <!-- dimension tooltip -->
  <div class="absolute left-[974px] top-[361px] flex h-[48px] w-[220px] items-center justify-center rounded-full bg-[#555] font-['Liberation_Sans',sans-serif] text-[28px] font-bold text-white shadow-[0_8px_24px_rgba(0,0,0,0.25)]">d4 : 0.5 mm</div>

  <!-- sketch palette -->
  <div class="absolute left-[1873px] top-[362px] flex h-[991px] w-[498px] flex-col rounded-t-[2px] border-2 border-[#adadad] bg-[#dcdcdc] text-[22.800px] text-[#444]">
    <div class="flex h-[47px] shrink-0 items-center border-b-2 border-[#b0b0b0] bg-[#cfcfcf] text-[#666]">
      <div class="ml-[1px] h-[14px] w-[2px] bg-[#999]"></div>
      <div class="ml-[3px] h-[22px] w-[2px] bg-[#777]"></div>
      <div class="ml-[14px] flex h-[16px] w-[16px] items-center justify-center rounded-[5px] bg-[#2b2b2b]"><div class="h-[2px] w-[12px] bg-[#cfcfcf]"></div></div>
      <span class="ml-[13px] pb-[3px] text-[23px]">SKETCH PALETTE</span>
      <svg class="ml-auto mr-[8px] h-[13px] w-[19px]" viewBox="0 0 19 13"><path d="M0 0v13l10-6.500zM9 0v13l10-6.500z" fill="#333"/></svg>
    </div>
    <div class="flex min-h-0 flex-1 overflow-hidden">
      <div class="flex min-w-0 flex-1 flex-col">
        <div class="flex h-[52px] shrink-0 items-center pl-[3px] font-semibold"><svg class="h-[11px] w-[18px]"><use href="#tri"/></svg><span class="ml-[8px]">Options</span></div>
        <div class="flex h-[52px] shrink-0 items-center pl-[19px]"><span class="w-[237px]">Look At</span><svg class="h-[28px] w-[30px] shrink-0"><use href="#look"/></svg></div>
        <div class="flex h-[52px] shrink-0 items-center pl-[19px]"><span class="w-[237px]">Sketch Grid</span><div class="flex h-[26px] w-[26px] items-center justify-center rounded-[4px] border-2 border-[#444] bg-linear-to-b from-[#f4f4f4] to-[#a8a8a8] shadow-[0_1px_0_#fff]"><svg class="h-[20px] w-[20px]"><use href="#chk"/></svg></div></div>
        <div class="flex h-[52px] shrink-0 items-center pl-[19px]"><span class="w-[237px]">Snap</span><div class="h-[26px] w-[26px] rounded-[4px] border-2 border-[#444] bg-linear-to-b from-[#f4f4f4] to-[#a8a8a8] shadow-[0_1px_0_#fff]"></div></div>
        <div class="flex h-[52px] shrink-0 items-center pl-[19px]"><span class="w-[237px]">Slice</span><div class="h-[26px] w-[26px] rounded-[4px] border-2 border-[#444] bg-linear-to-b from-[#f4f4f4] to-[#a8a8a8] shadow-[0_1px_0_#fff]"></div></div>
        <div class="flex h-[52px] shrink-0 items-center pl-[19px]"><span class="w-[237px]">Show Profile</span><div class="flex h-[26px] w-[26px] items-center justify-center rounded-[4px] border-2 border-[#444] bg-linear-to-b from-[#f4f4f4] to-[#a8a8a8] shadow-[0_1px_0_#fff]"><svg class="h-[20px] w-[20px]"><use href="#chk"/></svg></div></div>
        <div class="flex h-[52px] shrink-0 items-center pl-[19px]"><span class="w-[237px]">Show Points</span><div class="flex h-[26px] w-[26px] items-center justify-center rounded-[4px] border-2 border-[#444] bg-linear-to-b from-[#f4f4f4] to-[#a8a8a8] shadow-[0_1px_0_#fff]"><svg class="h-[20px] w-[20px]"><use href="#chk"/></svg></div></div>
        <div class="flex h-[52px] shrink-0 items-center pl-[19px]"><span class="w-[237px]">Show Constraints</span><div class="flex h-[26px] w-[26px] items-center justify-center rounded-[4px] border-2 border-[#444] bg-linear-to-b from-[#f4f4f4] to-[#a8a8a8] shadow-[0_1px_0_#fff]"><svg class="h-[20px] w-[20px]"><use href="#chk"/></svg></div></div>
        <div class="flex h-[52px] shrink-0 items-center pl-[19px]"><span class="w-[237px]">3D Sketch</span><div class="h-[26px] w-[26px] rounded-[4px] border-2 border-[#444] bg-linear-to-b from-[#f4f4f4] to-[#a8a8a8] shadow-[0_1px_0_#fff]"></div></div>
        <div class="flex h-[52px] shrink-0 items-center pl-[3px] font-semibold"><svg class="h-[11px] w-[18px]"><use href="#tri"/></svg><span class="ml-[8px]">Constraints</span></div>
        <div class="flex h-[52px] shrink-0 items-center pl-[19px]"><span class="w-[237px]">Coincident</span>
          <svg class="h-[30px] w-[30px] shrink-0 overflow-visible" viewBox="0 0 30 30"><path d="M6 1V27H28" fill="none" stroke="#333" stroke-width="1.300"/><path d="M6 25l-3-5h6z" fill="#333"/><rect x="4.500" y="0" width="3" height="3" fill="#f00"/><rect x="4.500" y="25.500" width="3" height="3" fill="#f00"/></svg></div>
        <div class="flex h-[52px] shrink-0 items-center pl-[19px]"><span class="w-[237px]">Collinear</span>
          <svg class="h-[30px] w-[30px] shrink-0 overflow-visible" viewBox="0 0 30 30"><path d="M6 30L19 17M-1 16L11 5" stroke="#333" stroke-width="1.300"/><path d="M22 15L31 5" stroke="#c8200a" stroke-width="1.300"/><path d="M4 10l10 10" stroke="#111" stroke-width="1.500"/><path d="M16 19l-7-1 5-5z" fill="#111"/></svg></div>
        <div class="flex h-[52px] shrink-0 items-center pl-[19px]"><span class="w-[237px]">Concentric</span>
          <svg class="h-[30px] w-[30px] shrink-0 overflow-visible" viewBox="0 0 30 30"><circle cx="15" cy="15" r="15" fill="none" stroke="#e8202e" stroke-width="2.200"/><circle cx="15" cy="15" r="9.500" fill="none" stroke="#5a6270" stroke-width="2.500"/></svg></div>
        <div class="flex h-[52px] shrink-0 items-center pl-[19px]"><span class="w-[237px]">Midpoint</span>
          <svg class="h-[30px] w-[30px] shrink-0 overflow-visible" viewBox="0 0 30 30"><path d="M15 4L28 28H2z" fill="none" stroke="#e8102a" stroke-width="1.600"/><rect x="13" y="2" width="4" height="4" fill="#e8102a"/></svg></div>
        <div class="flex h-[52px] shrink-0 items-center pl-[19px]"><span class="w-[237px]">Fix/UnFix</span>
          <svg class="h-[30px] w-[30px] shrink-0 overflow-visible" viewBox="0 0 30 30"><path d="M8 14V8Q8 3 14 3T20 8V14" fill="none" stroke="#b83210" stroke-width="2.500"/><rect x="3.500" y="13.500" width="21" height="14" fill="#f3b9a0" stroke="#b83210" stroke-width="1.600"/><rect x="13" y="19" width="2" height="6" fill="#b83210"/></svg></div>
        <div class="flex h-[52px] shrink-0 items-center pl-[19px]"><span class="w-[237px]">Parallel</span>
          <svg class="h-[30px] w-[30px] shrink-0 overflow-visible" viewBox="0 0 30 30"><path d="M1 22L23 1" stroke="#333" stroke-width="1.300"/><path d="M7 28L29 7" stroke="#c8200a" stroke-width="1.300"/></svg></div>
        <div class="flex h-[52px] shrink-0 items-center pl-[19px]"><span class="w-[237px]">Perpendicular</span>
          <svg class="h-[30px] w-[30px] shrink-0 overflow-visible" viewBox="0 0 30 30"><path d="M8 22L29 1" stroke="#333" stroke-width="1.300"/><path d="M1 15L15 29" stroke="#c8200a" stroke-width="1.300"/></svg></div>
      </div>
      <div class="mr-[3px] w-[12px] shrink-0 rounded-t-[6px] bg-[#b3b3b3]">
        <div class="h-[661px] rounded-[6px] bg-[#8f8f8f]"></div>
      </div>
    </div>
    <div class="flex h-[71px] shrink-0 items-start justify-end border-t-2 border-[#b0b0b0] bg-[#cfcfcf] pr-[20px] pt-[14px]">
      <div class="flex h-[43px] w-[151px] items-center justify-center border-2 border-[#bcbcbc] bg-[#ededed] text-[24.500px] text-[#555]">Stop Sketch</div>
    </div>
  </div>

  <!-- bottom navigation bar -->
  <div class="absolute left-[940px] top-[1307px] flex h-[48px] items-center gap-[14px]">
    <div class="flex h-[48px] w-[289px] items-center bg-[#c8c8c8]">
      <svg class="ml-[8px] h-[32px] w-[30px] shrink-0" viewBox="0 0 30 32">
        <ellipse cx="15" cy="18" rx="14" ry="7" fill="none" stroke="#3c4350" stroke-width="1.500"/>
        <path d="M15 1l6 8h-3v21h-6V9H9z" fill="url(#gGray)" stroke="#555" stroke-width="1"/>
        <path d="M8 24l-5-1 3 4z" fill="#333"/>
      </svg>
      <svg class="ml-[10px] h-[12px] w-[18px] shrink-0"><use href="#tri"/></svg>
      <svg class="ml-[8px] h-[28px] w-[30px] shrink-0"><use href="#look"/></svg>
      <svg class="ml-[21px] h-[32px] w-[30px] shrink-0" viewBox="0 0 30 32">
        <path d="M9 29C6 25 2 20 1 16c1-2 3-1 4 1l3 3-1-14c0-3 3-3 3 0l1 7V2c0-2 4-2 4 0v11l1-10c0-3 4-3 4 0l-1 12 3-8c1-2 4-1 3 2l-3 11c-1 5-3 7-4 10z" fill="#fff" stroke="#333" stroke-width="1.200"/>
      </svg>
      <svg class="ml-[22px] h-[32px] w-[30px] shrink-0" viewBox="0 0 30 32">
        <path d="M17 19L29 30" stroke="#2b2b2b" stroke-width="4" stroke-linecap="round"/>
        <circle cx="11" cy="12" r="10" fill="#e4f1f4" stroke="#333" stroke-width="1.400"/>
        <path d="M26 1V8M22 4.500H30M22 10H30" stroke="#333" stroke-width="1.200"/>
      </svg>
      <svg class="ml-[22px] h-[32px] w-[30px] shrink-0" viewBox="0 0 30 32">
        <path d="M17 19L29 30" stroke="#2b2b2b" stroke-width="4" stroke-linecap="round"/>
        <circle cx="11" cy="12" r="10.500" fill="#eef3f4" stroke="#333" stroke-width="1.400"/>
        <rect x="5.500" y="6.500" width="11" height="11" fill="#f2f2f2" stroke="#444" stroke-width="1.200"/>
      </svg>
      <svg class="ml-[11px] h-[12px] w-[18px] shrink-0"><use href="#tri"/></svg>
    </div>
    <div class="flex h-[48px] w-[187px] items-center bg-[#c8c8c8]">
      <svg class="ml-[8px] h-[32px] w-[30px] shrink-0" viewBox="0 0 30 32">
        <rect x="0.700" y="1" width="28.600" height="23" fill="#f1f3f6" stroke="#3a3f48" stroke-width="1.300"/>
        <rect x="3.500" y="4" width="23" height="17" fill="#8db4e0" stroke="#22436e" stroke-width="1"/>
        <path d="M12 24h6v3h-6zM7 28H23v3H7z" fill="#d9dde3" stroke="#666" stroke-width="0.800"/>
      </svg>
      <svg class="ml-[5px] h-[12px] w-[18px] shrink-0"><use href="#tri"/></svg>
      <svg class="ml-[9px] h-[30px] w-[30px] shrink-0" viewBox="0 0 30 30">
        <rect x="0.700" y="0.700" width="28.600" height="28.600" fill="url(#gFolder)" stroke="#333" stroke-width="1.300"/>
        <path d="M5.500 1V29M10 1V29M15 1V29M20 1V29M24.500 1V29M1 5.500H29M1 10H29M1 15H29M1 20H29M1 24.500H29" stroke="#6a6a6a" stroke-width="0.800"/>
      </svg>
      <svg class="ml-[5px] h-[12px] w-[18px] shrink-0"><use href="#tri"/></svg>
      <svg class="ml-[9px] h-[26px] w-[30px] shrink-0" viewBox="0 0 30 26">
        <rect x="0.700" y="0.700" width="28.600" height="24.600" fill="#d5dfeb" stroke="#1f3f6e" stroke-width="1.400"/>
        <rect x="3" y="3" width="11" height="9" fill="#86aede" stroke="#1f3f6e" stroke-width="0.800"/>
        <rect x="16" y="3" width="11" height="9" fill="#86aede" stroke="#1f3f6e" stroke-width="0.800"/>
        <rect x="3" y="14" width="11" height="9" fill="#86aede" stroke="#1f3f6e" stroke-width="0.800"/>
        <rect x="16" y="14" width="11" height="9" fill="#86aede" stroke="#1f3f6e" stroke-width="0.800"/>
      </svg>
      <svg class="ml-[5px] h-[12px] w-[18px] shrink-0"><use href="#tri"/></svg>
    </div>
  </div>
</div>
</body>
</html>
